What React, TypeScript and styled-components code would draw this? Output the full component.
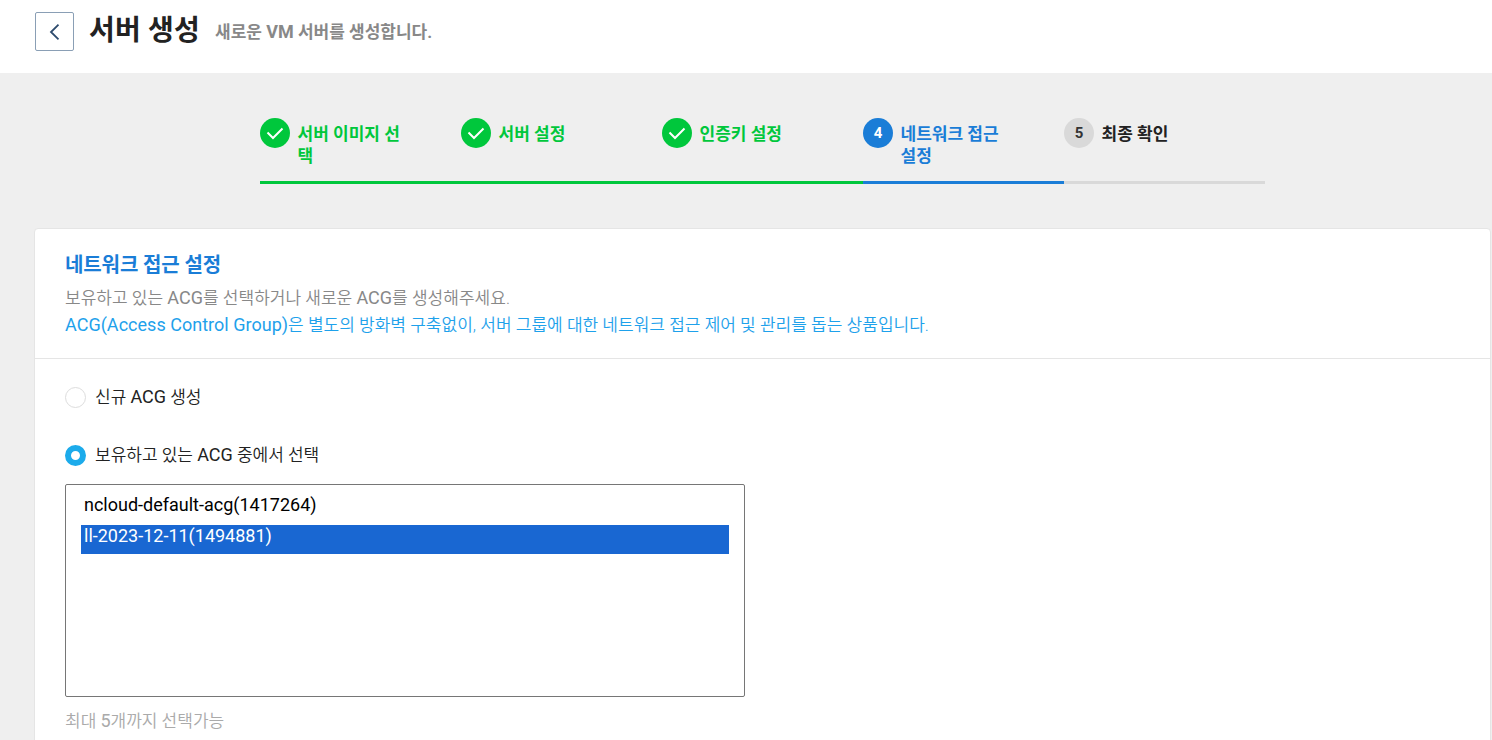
import React from 'react';
import styled, { createGlobalStyle } from 'styled-components';

const GlobalStyle = createGlobalStyle`
  * {
    box-sizing: border-box;
  }

  body {
    margin: 0;
    background: #efefef;
    color: #222;
    font-family: Roboto, 'Noto Sans CJK KR', sans-serif;
    overflow: hidden;
  }

  h1, h2, p, ol {
    margin: 0;
    padding: 0;
  }
`;

type StepState = 'done' | 'current' | 'todo';

interface IStepProps {
  state: StepState;
}

const stepColor = { done: '#00c73c', current: '#1a7dd7', todo: '#d9d9d9' };

const Page = styled.div`
  height: 740px;
  overflow: hidden;
`;

const Header = styled.header`
  display: flex;
  align-items: flex-start;
  height: 73px;
  padding: 12px 0 0 35px;
  background: #fff;
`;

const BackButton = styled.button`
  display: flex;
  align-items: center;
  justify-content: center;
  width: 39px;
  height: 39px;
  padding: 0;
  border: 1px solid #8a9fb5;
  border-radius: 2px;
  background: #fff;
`;

const Title = styled.h1`
  margin: 1px 0 0 15px;
  color: #222;
  font-size: 28px;
  font-weight: 700;
  line-height: 36px;
  letter-spacing: 0.2px;
  white-space: nowrap;
`;

const SubTitle = styled.p`
  margin: 1px 0 0 15px;
  color: #888;
  font-size: 17px;
  font-weight: 700;
  line-height: 39px;
  white-space: nowrap;
`;

// latin letters run one pixel larger than the hangul around them
const Latin = styled.span`
  font-size: 18px;
  font-weight: 400;
  line-height: 1;
`;

const LatinBold = styled(Latin)`
  font-weight: 700;
`;

const Steps = styled.ol`
  display: flex;
  width: 1005px;
  height: 111px;
  margin: 0 0 0 260px;
  padding-top: 45px;
  list-style: none;
`;

const StepItem = styled.li<IStepProps>`
  display: flex;
  width: 201px;
  border-bottom: 3px solid ${(props) => stepColor[props.state]};
`;

const StepMark = styled.span<IStepProps>`
  display: flex;
  flex: none;
  align-items: center;
  justify-content: center;
  width: 30px;
  height: 30px;
  border-radius: 50%;
  background: ${(props) => stepColor[props.state]};
  color: ${(props) => (props.state === 'todo' ? '#333' : '#fff')};
  font-size: 15px;
  font-weight: 700;
`;

const StepLabel = styled.span<IStepProps>`
  margin: 5px 0 0 7.5px;
  color: ${(props) => (props.state === 'todo' ? '#222' : stepColor[props.state])};
  font-size: 17px;
  font-weight: 700;
  line-height: 22px;
  white-space: pre;
`;

const Card = styled.section`
  width: 1457px;
  height: 560px;
  margin: 44px 0 0 34px;
  border: 1px solid #e5e5e5;
  border-radius: 4px;
  background: #fff;
`;

const CardHeader = styled.div`
  height: 130px;
  padding: 22px 30px 0;
  border-bottom: 1px solid #e5e5e5;
`;

const CardTitle = styled.h2`
  color: #1a7dd7;
  font-size: 20px;
  font-weight: 700;
  line-height: 28px;
  letter-spacing: -0.1px;
`;

const Description = styled.p<{ accent?: boolean }>`
  margin-top: ${(props) => (props.accent ? '0' : '6px')};
  color: ${(props) => (props.accent ? '#1ea1eb' : '#888')};
  font-size: 17px;
  font-weight: 350;
  line-height: 27px;
  letter-spacing: 0.02px;
  white-space: nowrap;
`;

const CardBody = styled.div`
  padding: 24px 30px 0;
`;

const RadioRow = styled.label`
  display: flex;
  align-items: center;
  height: 28px;
  margin-bottom: 30px;
  font-size: 17px;
  font-weight: 350;
  line-height: 24px;
  white-space: nowrap;
`;

const Radio = styled.span<{ checked?: boolean }>`
  width: 21px;
  height: 21px;
  margin: 0 9px 0 0;
  border: ${(props) => (props.checked ? '6px solid #1cabeb' : '1px solid #ddd')};
  border-radius: 50%;
  background: #fff;
`;

const AcgList = styled.div`
  width: 680px;
  height: 213px;
  margin-top: -15px;
  padding: 8px 15px;
  border: 1px solid #767676;
  border-radius: 2px;
`;

const AcgOption = styled.div<{ selected?: boolean }>`
  height: 29px;
  margin-bottom: 3px;
  padding-left: 3px;
  background: ${(props) => (props.selected ? '#1967d2' : 'transparent')};
  color: ${(props) => (props.selected ? '#fff' : '#000')};
  font-size: 18px;
  line-height: ${(props) => (props.selected ? '22px' : '24px')};
`;

const Hint = styled.p`
  margin-top: 12px;
  color: #aaa;
  font-size: 17px;
  font-weight: 350;
  line-height: 25px;
`;

const steps: { label: string; state: StepState }[] = [
  { label: '서버 이미지 선\n택', state: 'done' },
  { label: '서버 설정', state: 'done' },
  { label: '인증키 설정', state: 'done' },
  { label: '네트워크 접근\n설정', state: 'current' },
  { label: '최종 확인', state: 'todo' },
];

const App = () => (
  <Page>
    <GlobalStyle />
    <Header>
      <BackButton aria-label="back">
        <svg width="12" height="18" viewBox="0 0 12 18" fill="none" stroke="#2d4b6d" strokeWidth="1.8">
          <path d="M9.5 1.7 2 9l7.500 7.300" />
        </svg>
      </BackButton>
      <Title>서버 생성</Title>
      <SubTitle>새로운 <LatinBold>VM</LatinBold> 서버를 생성합니다.</SubTitle>
    </Header>
    <Steps>
      {steps.map(({ label, state }, index) => (
        <StepItem key={label} state={state}>
          <StepMark state={state}>
            {state === 'done' ? (
              <svg width="18" height="14" viewBox="0 0 18 14" fill="none" stroke="#fff" strokeWidth="2">
                <path d="m1.500 6.500 5.500 5.500 9.500-9.500" />
              </svg>
            ) : (
              index + 1
            )}
          </StepMark>
          <StepLabel state={state}>{label}</StepLabel>
        </StepItem>
      ))}
    </Steps>
    <Card>
      <CardHeader>
        <CardTitle>네트워크 접근 설정</CardTitle>
        <Description>
          보유하고 있는 <Latin>ACG</Latin>를 선택하거나 새로운 <Latin>ACG</Latin>를 생성해주세요.
        </Description>
        <Description accent>
          <Latin>ACG(Access Control Group)</Latin>은 별도의 방화벽 구축없이, 서버 그룹에 대한 네트워크 접근 제어 및 관리를 돕는 상품입니다.
        </Description>
      </CardHeader>
      <CardBody>
        <RadioRow>
          <Radio />
          <span>신규 <Latin>ACG</Latin> 생성</span>
        </RadioRow>
        <RadioRow>
          <Radio checked />
          <span>보유하고 있는 <Latin>ACG</Latin> 중에서 선택</span>
        </RadioRow>
        <AcgList>
          <AcgOption>ncloud-default-acg(1417264)</AcgOption>
          <AcgOption selected>ll-2023-12-11(1494881)</AcgOption>
        </AcgList>
        <Hint>최대 <Latin>5</Latin>개까지 선택가능</Hint>
      </CardBody>
    </Card>
  </Page>
);

export default App;
